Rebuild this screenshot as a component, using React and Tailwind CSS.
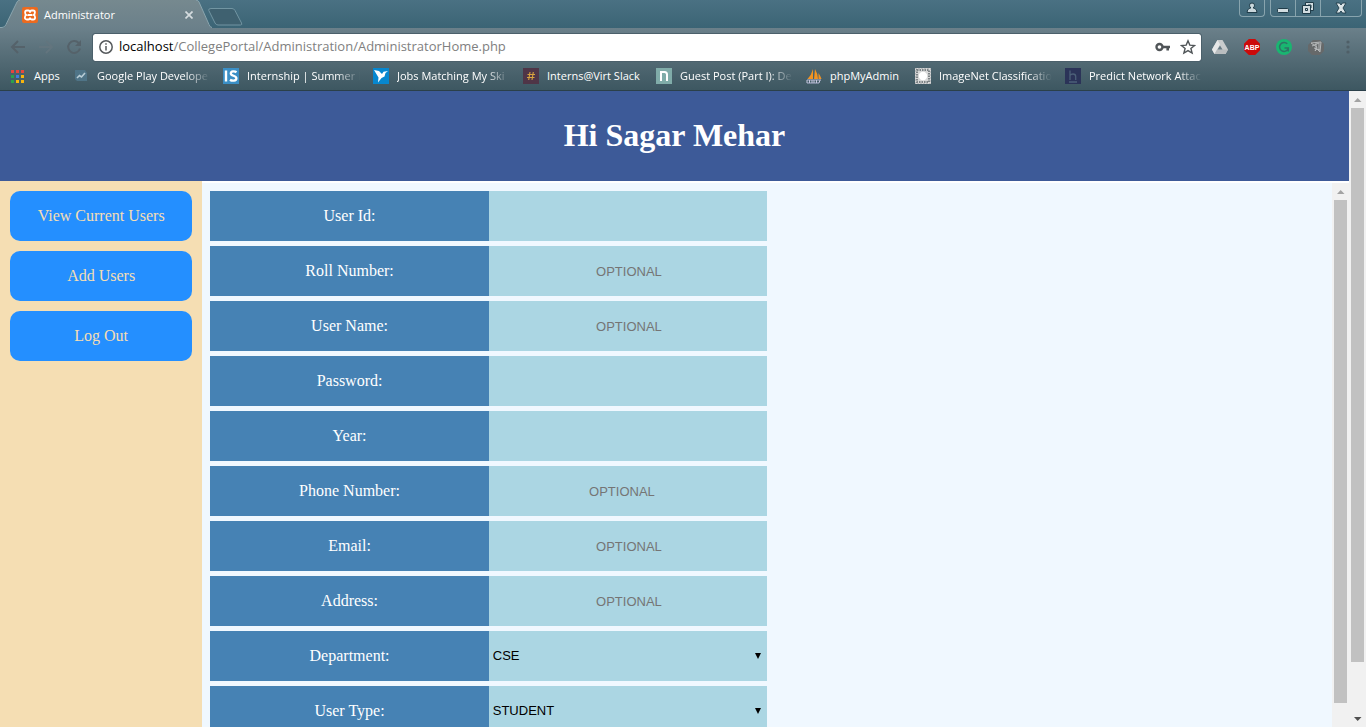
import React from "react";

const fade =
  "[mask-image:linear-gradient(to_right,black_calc(100%-24px),transparent)]";

const icons = {
  play: (
    <svg viewBox="0 0 16 16" className="size-4">
      <path d="M2 2h10l2 3v8H4l-2-2z" fill="#4f7487" />
      <path d="M4 10 6.500 7.500l2 1.500L12 5" fill="none" stroke="#b9cdd6" strokeWidth="1.600" />
    </svg>
  ),
  is: (
    <svg viewBox="0 0 16 16" className="size-4">
      <rect width="16" height="16" fill="#3b8fc6" />
      <path d="M3 2.500v11" stroke="#fff" strokeWidth="2.400" />
      <path d="M13.500 4.300C12 3.200 7.800 2.800 7.800 5.500c0 2.700 5.600 1.800 5.600 4.800 0 3-4.500 2.800-6.400 1.400" fill="none" stroke="#fff" strokeWidth="2.300" />
    </svg>
  ),
  bird: (
    <svg viewBox="0 0 16 16" className="size-4">
      <rect width="16" height="16" fill="#0787cf" />
      <path d="M1 2l5 1 3 3 1.500-2.300L15 3 12.500 5l-1 3.500L8.500 10 5 14.500l.5-5z" fill="#fff" />
    </svg>
  ),
  hash: (
    <svg viewBox="0 0 16 16" className="size-4">
      <rect width="16" height="16" fill="#4f3547" />
      <path d="M7 4 5.700 12M10.300 4 9 12M4.500 6.500h7.500M4 9.500h7.500" stroke="#d8a33f" strokeWidth="1.100" />
    </svg>
  ),
  n: (
    <svg viewBox="0 0 16 16" className="size-4">
      <rect width="16" height="16" fill="#80aca9" />
      <path d="M5 13V4h3.500q2.500 0 2.500 2.500V13" fill="none" stroke="#fff" strokeWidth="2" />
    </svg>
  ),
  sails: (
    <svg viewBox="0 0 16 16" className="size-4">
      <path d="M7 1v10H1.500Q5.500 7 7 1zM9 1q3 5 3 10H8zM12.500 5q2 3 3 6h-3z" fill="#f29422" />
      <path d="M1 12h14M1 15h12" stroke="#aeb2d0" strokeWidth="1" />
      <path d="M1 15v-3M3.500 12v3M6 12v3M8 12v3M10.500 12v3M14 12l-1 3" stroke="#c6c7de" strokeWidth="1" />
    </svg>
  ),
  net: (
    <svg viewBox="0 0 16 16" className="size-4">
      <rect width="16" height="16" fill="#d7d8d8" />
      <rect x="2" y="2" width="12" height="12" fill="none" stroke="#7d8386" strokeWidth="2" strokeDasharray="1.500 1" />
      <rect x=".5" y=".5" width="15" height="15" fill="none" stroke="#a0a5a8" strokeDasharray="1 2" />
      <circle cx="8" cy="8" r="4.200" fill="#fff" />
    </svg>
  ),
  h: (
    <svg viewBox="0 0 16 16" className="size-4">
      <rect width="16" height="16" fill="#2b3358" />
      <path d="M5 2.500V12M5 7.500Q6 6 8 6q2.700 0 2.700 2.500V12M4 14h8" fill="none" stroke="#4c6078" strokeWidth="1.300" />
    </svg>
  ),
};

const bookmarks = [
  { icon: "play", text: "Google Play Develope", cut: true },
  { icon: "is", text: "Internship | Summer I", cut: true },
  { icon: "bird", text: "Jobs Matching My Ski", cut: true },
  { icon: "hash", text: "Interns@Virt Slack", width: "w-24" },
  { icon: "n", text: "Guest Post (Part I): De", cut: true },
  { icon: "sails", text: "phpMyAdmin", width: "w-[72px]" },
  { icon: "net", text: "ImageNet Classificatio", cut: true },
  { icon: "h", text: "Predict Network Attac", cut: true },
];

const fields = [
  { id: "userid", label: "User Id:", type: "text" },
  { id: "roll", label: "Roll Number:", type: "text", hint: "OPTIONAL" },
  { id: "name", label: "User Name:", type: "text", hint: "OPTIONAL" },
  { id: "password", label: "Password:", type: "password" },
  { id: "year", label: "Year:", type: "text" },
  { id: "phone", label: "Phone Number:", type: "tel", hint: "OPTIONAL" },
  { id: "email", label: "Email:", type: "email", hint: "OPTIONAL" },
  { id: "address", label: "Address:", type: "text", hint: "OPTIONAL" },
  { id: "department", label: "Department:", options: ["CSE", "ECE", "ME"] },
  { id: "usertype", label: "User Type:", options: ["STUDENT", "FACULTY"] },
];

const appColors = [
  "bg-[#e8453c]", "bg-[#e8453c]", "bg-[#e8453c]",
  "bg-[#2ba24c]", "bg-[#3f7de0]", "bg-[#f7b50c]",
  "bg-[#2ba24c]", "bg-[#f7b50c]", "bg-[#f7b50c]",
];

function TabStrip() {
  return (
    <div className="flex h-7 items-start justify-between bg-linear-to-b from-[#4a7183] to-[#3b6475]">
      <div className="flex">
        <div className="relative flex h-7 w-[212px] items-center pt-[2px] pr-[19px] pl-[22px]">
          <svg viewBox="0 0 212 28" className="absolute inset-0 h-7 w-[212px]">
            <defs>
              <linearGradient id="tab" x2="0" y2="1">
                <stop stopColor="#76898f" />
                <stop offset="1" stopColor="#6b808a" />
              </linearGradient>
            </defs>
            <path d="M0 28h2q3 0 4-3L17 2q1-2 3-2h176q2 0 3 2l10 23q1 3 3 3z" fill="url(#tab)" />
            <path d="M0 27.500h2q3 0 4-3L17 2q1-2 3-2M196 0q2 0 3 2l10 22.500q1 3 3 3" fill="none" stroke="#8ba5ae" />
          </svg>
          <svg viewBox="0 0 16 16" className="relative size-4">
            <rect width="16" height="16" rx="2" fill="#ec6a1f" />
            <path d="M4.800 3.500h1.500q1.700 0 1.700 1.800v.4q0-2.200 1.700-2.200h1.500q1.700 0 1.700 1.900T11.500 8q1.600.4 1.600 2.400 0 2.100-1.900 2.100H9.700Q8 12.500 8 10.500q0 2-1.700 2H4.800q-1.900 0-1.900-2.100Q2.900 8.400 4.500 8 3.100 7.500 3.100 5.400q0-1.900 1.700-1.900zM6 8h4" fill="none" stroke="#fff" strokeWidth="1.800" />
          </svg>
          <span className="relative ml-[6px] flex-1 text-[11px] text-white">Administrator</span>
          <button aria-label="Close tab" className="relative size-2">
            <svg viewBox="0 0 8 8" className="size-2">
              <path d="m.5.5 7 7m0-7-7 7" stroke="#d5dcdf" strokeWidth="1.700" />
            </svg>
          </button>
        </div>
        <button aria-label="New tab" className="-ml-1 pt-[6px]">
          <svg viewBox="0 0 36 18" className="h-[18px] w-9">
            <path d="M3 .5h21q2 0 3 2L33.500 15q1 2-1 2H10q-2 0-3-2L.8 2.500Q0 .5 3 .5z" fill="#3f6170" stroke="#7295a2" />
          </svg>
        </button>
      </div>
      <div className="flex gap-[5px] pr-1">
        <button aria-label="Profile" className="flex h-[17px] w-[26px] items-center justify-center rounded-b border border-t-0 border-[#88a4ae]">
          <svg viewBox="0 0 12 12" className="size-3">
            <path d="M3.500 3.200Q3.500 1 6 1t2.500 2.200q0 2-1.500 2.800h1q3 1 3 4.500H1Q1 7 4 6h1Q3.500 5.200 3.500 3.200z" fill="#c9d7dc" stroke="#203c49" />
          </svg>
        </button>
        <div className="flex h-[17px] overflow-hidden rounded-b border border-t-0 border-[#88a4ae]">
          <button aria-label="Minimize" className="flex w-[25px] items-center justify-center border-r border-[#88a4ae]">
            <svg viewBox="0 0 14 14" className="size-[14px]">
              <rect x="1.500" y="7.500" width="11" height="4" rx="1" fill="#d2dde1" stroke="#203c49" />
            </svg>
          </button>
          <button aria-label="Restore" className="flex w-[25px] items-center justify-center border-r border-[#88a4ae]">
            <svg viewBox="0 0 14 14" className="size-[14px]">
              <path fillRule="evenodd" d="M4.500 1.500h8v8h-8zM7 4v3h3V4z" fill="#d2dde1" stroke="#203c49" />
              <path fillRule="evenodd" d="M1.500 4.500h8v8h-8zM4.500 7.500v2h2v-2z" fill="#d2dde1" stroke="#203c49" />
            </svg>
          </button>
          <button aria-label="Close" className="flex w-10 items-center justify-center">
            <svg viewBox="0 0 14 12" className="h-3 w-[14px]">
              <path d="M2 1h3.500L7 3l1.500-2H12L9 6l3 5H8.500L7 9l-1.500 2H2l3-5z" fill="#dbe4e7" stroke="#203c49" strokeWidth=".9" />
            </svg>
          </button>
        </div>
      </div>
    </div>
  );
}

function Toolbar() {
  return (
    <div className="flex h-[34px] items-center pt-[4px] pr-[10px] pl-[10px]">
      <div className="flex w-[83px] gap-3">
        <button aria-label="Back">
          <svg viewBox="0 0 16 16" className="size-4" fill="none" stroke="#55626a" strokeWidth="2">
            <path d="M15 8H2.500M8 2 2 8l6 6" />
          </svg>
        </button>
        <button aria-label="Forward">
          <svg viewBox="0 0 16 16" className="size-4" fill="none" stroke="#63757e" strokeWidth="2">
            <path d="M1 8h12.500M8 2l6 6-6 6" />
          </svg>
        </button>
        <button aria-label="Reload">
          <svg viewBox="0 0 16 16" className="size-4">
            <path d="M12.700 4A6 6 0 1 0 14 9.500" fill="none" stroke="#55626a" strokeWidth="2" />
            <path d="M15 1v6H9z" fill="#55626a" />
          </svg>
        </button>
      </div>
      <div className="flex h-[27px] flex-1 items-center rounded-xs bg-white pr-[5px] pl-[6px] outline outline-[#4b606b]">
        <svg viewBox="0 0 14 14" className="size-[14px]" fill="none" stroke="#55595c" strokeWidth="1.500">
          <circle cx="7" cy="7" r="6.200" />
          <path d="M7 6v4.500M7 3.300v1.500" />
        </svg>
        <div className="ml-[6px] flex-1 text-[13px] text-[#808080]">
          <span className="text-black">localhost</span>/CollegePortal/Administration/AdministratorHome.php
        </div>
        <button aria-label="Saved password">
          <svg viewBox="0 0 16 10" className="h-[10px] w-4" fill="none" stroke="#505558">
            <circle cx="4.500" cy="5" r="3" strokeWidth="2.400" />
            <path d="M7.500 5H15M12.700 5v3.500" strokeWidth="2.600" />
          </svg>
        </button>
        <button aria-label="Bookmark this page" className="ml-[9px]">
          <svg viewBox="0 0 16 16" className="size-4" fill="none" stroke="#505558" strokeWidth="1.400">
            <path d="m8 1.800 1.800 4.300 4.700.4-3.600 3 1.200 4.600L8 11.600l-4.100 2.500 1.200-4.600-3.600-3 4.700-.4z" />
          </svg>
        </button>
      </div>
      <div className="ml-[11px] flex items-center gap-4">
        <button aria-label="Google Drive">
          <svg viewBox="0 0 16 16" className="size-4">
            <path d="M5.500 1h5L16 10.500 13.500 15h-11L0 10.500z" fill="#c9cccd" />
            <path d="M5.500 1 0 10.500 2.500 15 8 5.500z" fill="#e7e8e8" />
            <path d="M2.500 15 5.200 10.500H16L13.500 15z" fill="#b9bdbf" />
            <path d="m8 6.500 2.500 4h-5z" fill="#667a83" />
          </svg>
        </button>
        <button aria-label="Adblock Plus" className="flex size-4 items-center justify-center bg-[#cc0a0a] font-['Liberation_Sans',sans-serif] text-[7px] leading-none font-bold text-white [clip-path:polygon(30%_0,70%_0,100%_30%,100%_70%,70%_100%,30%_100%,0_70%,0_30%)]">
          ABP
        </button>
        <button aria-label="Grammarly">
          <svg viewBox="0 0 16 16" className="size-4">
            <circle cx="8" cy="8" r="8" fill="#19b671" />
            <path d="M11.300 4.800A4.500 4.500 0 1 0 12.300 9.500M8.500 9h3.800v3.500" fill="none" stroke="#2d7565" strokeWidth="1.500" />
          </svg>
        </button>
        <button aria-label="Extension">
          <svg viewBox="0 0 16 16" className="size-4">
            <path d="M5 1h7l4 4v7l-4 4H4l-4-4V6z" fill="#66696a" />
            <path d="m3 4 10-1-1 10-3-3-2 2 2-4zM4 7l7-3M6 9l6 2M8 4v6M11 4v8" fill="none" stroke="#b5b8b9" />
          </svg>
        </button>
        <button aria-label="Menu">
          <svg viewBox="0 0 16 16" className="size-4" fill="#4f5f67">
            <circle cx="8" cy="3" r="1.600" />
            <circle cx="8" cy="8" r="1.600" />
            <circle cx="8" cy="13" r="1.600" />
          </svg>
        </button>
      </div>
    </div>
  );
}

function Bookmarks() {
  return (
    <nav className="flex h-7 items-center gap-[13px] pl-[11px] text-[11px] text-white">
      <a href="#apps" className="flex w-[49px] items-center gap-[10px]">
        <span className="grid grid-cols-3 gap-[2px]">
          {appColors.map((c, i) => (
            <span key={i} className={`size-[3px] ${c}`} />
          ))}
        </span>
        Apps
      </a>
      {bookmarks.map((b) => (
        <a key={b.text} href={`#${b.icon}`} className="flex shrink-0 items-center gap-2">
          {icons[b.icon]}
          <span className={`whitespace-nowrap ${b.cut ? `w-[113px] overflow-hidden ${fade}` : b.width}`}>
            {b.text}
          </span>
        </a>
      ))}
    </nav>
  );
}

function Arrow({ down }) {
  return (
    <svg viewBox="0 0 17 17" className="size-[17px] shrink-0">
      {down ? <path d="M5 7h7.500L8.700 11z" fill="#505050" /> : <path d="M5 11h7.500L8.700 7z" fill="#a3a3a3" />}
    </svg>
  );
}

function Field({ f }) {
  const box = "h-[50px] w-1/2 rounded-none bg-[#abd6e3] font-['Liberation_Sans',Arial,sans-serif] text-[13px]";
  return (
    <div className="flex">
      <label htmlFor={f.id} className="flex h-[50px] w-1/2 items-center justify-center bg-[#4682b4] text-base text-white">
        {f.label}
      </label>
      {f.options ? (
        <div className="relative w-1/2">
          <select id={f.id} className="h-[50px] w-full appearance-none bg-[#abd6e3] pl-1 font-['Liberation_Sans',Arial,sans-serif] text-[13px] text-black">
            {f.options.map((o) => (
              <option key={o}>{o}</option>
            ))}
          </select>
          <svg viewBox="0 0 6 6" className="pointer-events-none absolute top-[22px] right-[6px] size-[6px]">
            <path d="M0 0h6L3 6z" />
          </svg>
        </div>
      ) : (
        <input
          id={f.id}
          type={f.type}
          placeholder={f.hint}
          className={`${box} text-center placeholder:text-[#757575] ${f.type === "tel" ? "pr-3" : "pl-[2px]"}`}
        />
      )}
    </div>
  );
}

export default function App() {
  return (
    <div className="flex h-screen flex-col overflow-hidden bg-white font-['Liberation_Serif','Times_New_Roman',serif]">
      <div className="shrink-0 font-['Open_Sans','Noto_Sans',sans-serif]">
        <TabStrip />
        <div className="border-b border-[#2b404a] bg-linear-to-b from-[#6b808a] to-[#3d5761]">
          <Toolbar />
          <Bookmarks />
        </div>
      </div>
      <div className="flex min-h-0 flex-1">
        <div className="flex min-w-0 flex-1 flex-col">
          <header className="flex h-[90px] shrink-0 items-center justify-center bg-[#3d5a98] pb-[2px]">
            <h1 className="text-[32px] font-bold text-white">Hi Sagar Mehar</h1>
          </header>
          <div className="flex min-h-0 flex-1">
            <aside className="flex w-[15%] shrink-0 flex-col gap-[10px] bg-[#f5deb3] p-[10px]">
              {["View Current Users", "Add Users", "Log Out"].map((t) => (
                <button key={t} className="h-[50px] shrink-0 rounded-[10px] bg-[#248fff] text-base text-[#f5deb3]">
                  {t}
                </button>
              ))}
            </aside>
            <main className="mt-[2px] flex min-w-0 flex-1 overflow-hidden bg-[#f0f8ff]">
              <div className="flex-1 p-2">
                <form className="flex w-1/2 flex-col gap-[5px]">
                  {fields.map((f) => (
                    <Field key={f.id} f={f} />
                  ))}
                </form>
              </div>
              <div className="flex w-[17px] flex-col bg-[#f1f1f1]">
                <Arrow />
                <div className="mx-[2px] mb-6 flex-1 bg-[#c1c1c1]" />
              </div>
            </main>
          </div>
        </div>
        <div className="flex w-[17px] flex-col bg-[#f1f1f1]">
          <Arrow />
          <div className="mx-[2px] mb-12 flex-1 bg-[#c1c1c1]" />
          <Arrow down />
        </div>
      </div>
    </div>
  );
}
